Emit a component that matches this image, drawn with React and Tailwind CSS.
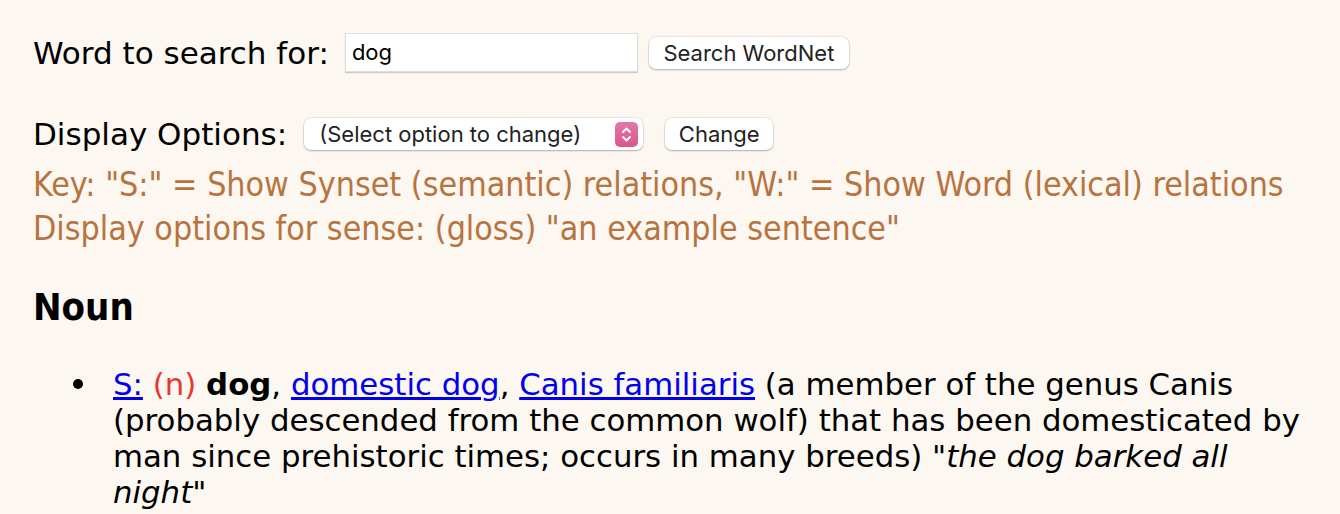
import React from "react";

function Stepper() {
  return (
    <span className="flex h-[25px] w-[23px] items-center justify-center rounded-[5px] bg-gradient-to-b from-[#e477a8] to-[#d9558f]">
      <svg width="11" height="17" viewBox="0 0 11 17" fill="none">
        <path d="M2 6 L5.5 2.5 L9 6" stroke="white" strokeWidth="2" strokeLinecap="round" strokeLinejoin="round" />
        <path d="M2 11 L5.5 14.5 L9 11" stroke="white" strokeWidth="2" strokeLinecap="round" strokeLinejoin="round" />
      </svg>
    </span>
  );
}

export default function App() {
  const body = { fontFamily: '"DejaVu Sans", Verdana, sans-serif' };
  const ui = { fontFamily: 'Inter, "Noto Sans", sans-serif' };
  const cond = { fontFamily: '"DejaVu Sans Condensed", "DejaVu Sans", sans-serif' };
  return (
    <div className="min-h-[514px] w-[1340px] bg-[#fcf7f1] pl-[33px] pt-[33px] text-black" style={body}>
      <div className="flex h-[39px] items-center">
        <span className="text-[31px] leading-[36px]">Word to search for:</span>
        <div
          className="ml-[16px] flex h-[39px] w-[293px] items-center border border-[#e2ddd8] bg-white pl-[6px] text-[22px] shadow-[0_1px_1px_rgba(0,0,0,0.18)]"
          style={ui}
        >
          dog
        </div>
        <button
          className="ml-[11px] h-[32px] w-[200px] rounded-[7px] bg-white text-[22px] leading-[32px] text-[#222] shadow-[0_0_0_0.5px_rgba(0,0,0,0.12),0_1px_2px_rgba(0,0,0,0.25)]"
          style={ui}
        >
          Search WordNet
        </button>
      </div>

      <div className="mt-[45px] flex h-[34px] items-center">
        <span className="text-[31px] leading-[36px]">Display Options:</span>
        <div
          className="ml-[17px] flex h-[32px] w-[339px] items-center justify-between rounded-[7px] bg-white pl-[15px] pr-[5px] text-[22px] text-[#222] shadow-[0_0_0_0.5px_rgba(0,0,0,0.12),0_1px_2px_rgba(0,0,0,0.25)]"
          style={ui}
        >
          <span>(Select option to change)</span>
          <Stepper />
        </div>
        <button
          className="ml-[22px] h-[32px] w-[108px] rounded-[7px] bg-white text-[22px] leading-[32px] text-[#222] shadow-[0_0_0_0.5px_rgba(0,0,0,0.12),0_1px_2px_rgba(0,0,0,0.25)]"
          style={ui}
        >
          Change
        </button>
      </div>

      <div className="mt-[12px] text-[33.7px] leading-[44px] text-[#b8743f]" style={cond}>
        <div>Key: "S:" = Show Synset (semantic) relations, "W:" = Show Word (lexical) relations</div>
        <div>Display options for sense: (gloss) "an example sentence"</div>
      </div>

      <h3 className="mt-[34px] text-[38px] font-bold leading-[44px]" style={cond}>
        Noun
      </h3>

      <ul className="mt-[37px] pl-[33px] pr-[30px] text-[30.8px] leading-[36px]">
        <li className="flex">
          <span className="flex h-[36px] w-[47px] shrink-0 items-center">
            <span className="ml-[7px] h-[10px] w-[10px] rounded-full bg-black" />
          </span>
          <span>
            <a href="#" className="text-[#0000ee] underline">S:</a>{" "}
            <span className="text-[#e8372c]">(n)</span> <b>dog</b>,{" "}
            <a href="#" className="text-[#0000ee] underline">domestic dog</a>,{" "}
            <a href="#" className="text-[#0000ee] underline">Canis familiaris</a> (a member of the genus Canis
            (probably descended from the common wolf) that has been domesticated by man since prehistoric
            times; occurs in many breeds) <i>"the dog barked all night"</i>
          </span>
        </li>
      </ul>
    </div>
  );
}
